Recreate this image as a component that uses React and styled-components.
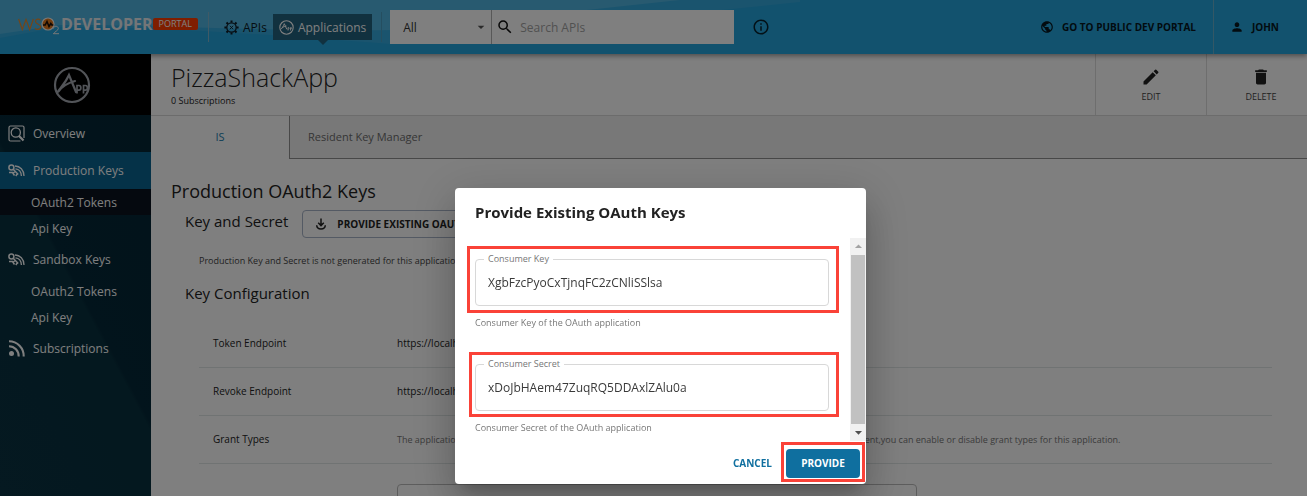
import React from 'react';
import styled, { createGlobalStyle, css } from 'styled-components';
import {
  MdPublic, MdPerson, MdEdit, MdDelete, MdSearch, MdOutlineInfo, MdArrowDropDown, MdArrowDropUp,
} from 'react-icons/md';

const GlobalStyle = createGlobalStyle`
  *, *::before, *::after { box-sizing: border-box; }
  html, body { margin: 0; padding: 0; }
  body { font-family: "Open Sans", "Noto Sans", sans-serif; font-size: 12px; color: #222; background: #fff; }
  button, input, select { font-family: inherit; }
  h1, h2, h3, p { margin: 0; font-weight: 400; }
  a { color: inherit; text-decoration: none; }
  svg { display: block; flex: none; }
`;

const Page = styled.div`
  height: 100vh;
  overflow: hidden;
  display: flex;
  flex-direction: column;
`;

/* ---------- top bar ---------- */
const TopBar = styled.header`
  flex: none;
  height: 54px;
  display: flex;
  align-items: center;
  position: relative;
  z-index: 1;
  background: #24a4dc;
  box-shadow: 0 2px 5px rgba(0, 0, 0, 0.4);
`;
const Wave = styled.svg`
  position: absolute;
  inset: 0;
  width: 100%;
  height: 100%;
  z-index: -1;
`;
const Logo = styled.a`
  display: flex;
  align-items: center;
  width: 209px;
  height: 30px;
  padding: 0 0 7px 18px;
  border-right: 1px solid #7fb4cc;
`;
const LogoName = styled.span`
  color: #e8edf0;
  font-size: 16px;
  line-height: 20px;
  font-weight: 700;
`;
const LogoTag = styled.span`
  background: #ff3c00;
  color: #fff;
  font-size: 9px;
  line-height: 12px;
  padding: 0 6px;
  border-radius: 2px;
`;
const MainNav = styled.nav`
  display: flex;
  align-items: center;
  height: 30px;
  padding: 0 9px;
  border-right: 1px solid #4a9cc0;
`;
const NavLink = styled.a`
  display: flex;
  align-items: center;
  gap: 4px;
  height: 26px;
  padding: 0 6px;
  font-size: 12px;
  position: relative;
  color: ${(p) => (p.$active ? '#fff' : '#0c1a24')};
  ${(p) => p.$active && css`
    background: #22627e;
    &::after {
      content: '';
      position: absolute;
      top: 100%;
      left: 50%;
      margin-left: -5px;
      border: 5px solid transparent;
      border-top-color: #22627e;
      border-bottom: 0;
    }
  `}
`;
const Search = styled.form`
  display: flex;
  margin-left: 8px;
  height: 34px;
  background: #fff;
`;
const SelectWrap = styled.div`
  display: flex;
  align-items: center;
  border-right: 1px solid #b0b0b0;
  width: 102px;
  padding-right: 2px;
  color: #555;
`;
const Select = styled.select`
  appearance: none;
  flex: 1;
  min-width: 0;
  height: 100%;
  padding: 0 0 0 13px;
  border: 0;
  background: transparent;
  font-size: 12px;
  color: #333;
`;
const SearchBox = styled.label`
  display: flex;
  align-items: center;
  gap: 4px;
  width: 242px;
  padding-left: 4px;
  color: #111;
`;
const SearchInput = styled.input`
  flex: 1;
  min-width: 0;
  border: 0;
  padding: 0 2px;
  background: transparent;
  font-size: 12px;
  &::placeholder { color: #a2a2a2; opacity: 1; }
`;
const IconButton = styled.button`
  margin-left: 18px;
  padding: 0;
  border: 0;
  background: none;
  color: #06222e;
`;
const UserNav = styled.nav`
  margin-left: auto;
  display: flex;
  align-self: stretch;
`;
const UserLink = styled.a`
  display: flex;
  align-items: center;
  gap: 8px;
  padding: ${(p) => (p.$user ? '0 28px 0 16px' : '0 17px')};
  border-left: ${(p) => (p.$user ? '1px solid #66b0cc' : '0')};
  font-size: 10px;
  font-weight: 700;
  color: #06161e;
`;

/* ---------- side bar ---------- */
const Body = styled.div`
  flex: 1;
  display: flex;
  min-height: 0;
`;
const SideBar = styled.aside`
  flex: none;
  width: 151px;
  background: linear-gradient(62deg, #0a3242 0%, #08303e 48%, #052838 49%, #042634 100%);
`;
const AppBadge = styled.div`
  height: 61px;
  display: flex;
  align-items: center;
  justify-content: center;
  padding-right: 8px;
  background: #000;
`;
const SideLink = styled.a`
  display: flex;
  align-items: center;
  gap: 8px;
  height: 37px;
  padding-left: 8px;
  font-size: 12px;
  color: #fff;
  background: ${(p) => (p.$active ? '#0a6490' : 'transparent')};
`;
const SubLink = styled.a`
  display: flex;
  align-items: center;
  height: 26px;
  padding-left: 31px;
  font-size: 12px;
  color: #fff;
  background: ${(p) => (p.$active ? '#0a131e' : 'transparent')};
`;

/* ---------- content ---------- */
const Main = styled.main`
  flex: 1;
  min-width: 0;
  background: #fff;
`;
const AppHeader = styled.div`
  display: flex;
  height: 62px;
  border-bottom: 1px solid #d8d8d8;
`;
const AppTitle = styled.div`
  flex: 1;
  padding: 7px 0 0 20px;
  h1 { font-size: 25px; line-height: 32px; font-weight: 300; }
  p { font-size: 9px; line-height: 16px; }
`;
const Action = styled.button`
  width: ${(p) => (p.$last ? '101px' : '111px')};
  display: flex;
  flex-direction: column;
  align-items: center;
  justify-content: center;
  gap: 4px;
  padding: ${(p) => (p.$last ? '0 0 0 8px' : '0')};
  border: 0;
  border-left: 1px solid #dcdcdc;
  background: none;
  font-size: 9px;
  line-height: 12px;
  color: #444;
  svg { color: #222; }
`;
const Tabs = styled.div`
  display: flex;
  height: 43px;
`;
const Tab = styled.button`
  width: 138px;
  padding: 0 0 2px;
  border: 0;
  background: none;
  color: #1a7cae;
  font-size: 11px;
`;
const IdleTab = styled(Tab)`
  flex: 1;
  padding-left: 18px;
  text-align: left;
  color: #6c6c6c;
  background: #f0f0f0;
  border-left: 1px solid #909090;
  border-bottom: 1px solid #909090;
`;
const Content = styled.section`
  padding: 19px 35px 0 20px;
  h2 { font-size: 18px; line-height: 26px; }
`;
const Group = styled.div`
  padding-left: 14px;
  h3 { font-size: 15px; line-height: 22px; }
`;
const GroupHead = styled.div`
  display: flex;
  align-items: flex-start;
  gap: 14px;
  height: 45px;
  padding-top: 6px;
`;
const OutlineButton = styled.button`
  display: flex;
  align-items: center;
  gap: 10px;
  height: 28px;
  padding: 0 12px;
  border: 1px solid #a8b4c8;
  border-radius: 4px;
  background: none;
  font-size: 10px;
  font-weight: 700;
  color: #222;
`;
const Note = styled.p`
  padding: 5px 14px 14px;
  font-size: 9px;
  line-height: 14px;
  color: #444;
`;
const ConfigTable = styled.table`
  width: calc(100% - 14px);
  margin: 15px 0 0 14px;
  border-collapse: collapse;
  table-layout: fixed;
  th, td { height: 48px; padding: 0; text-align: left; font-weight: 400; font-size: 10px; }
  th { width: 198px; padding-left: 14px; }
  tr { border-bottom: 1px solid #e0e6e6; }
  tr:last-child { border-bottom: 0; }
`;
const Hint = styled.span`
  font-size: 9px;
  color: #777;
`;
const ConfigInput = styled.input`
  display: block;
  width: 100%;
  max-width: 520px;
  height: 46px;
  margin-top: 20px;
  border: 1px solid #bbb;
  border-radius: 4px;
  background: none;
`;

/* ---------- dialog ---------- */
const Backdrop = styled.div`
  position: fixed;
  inset: 0;
  z-index: 10;
  display: flex;
  justify-content: center;
  align-items: flex-start;
  padding: 188px 0 0 14px;
  background: rgba(0, 0, 0, 0.5);
`;
const Dialog = styled.div`
  width: 411px;
  border-radius: 4px;
  background: #fff;
  box-shadow: 0 11px 15px -7px rgba(0, 0, 0, 0.2), 0 24px 38px 3px rgba(0, 0, 0, 0.14), 0 9px 46px 8px rgba(0, 0, 0, 0.12);
  h2 { padding: 14px 20px 15px; font-size: 15px; line-height: 21px; font-weight: 700; }
`;
const DialogBody = styled.div`
  display: flex;
  height: 203px;
`;
const Fields = styled.div`
  flex: 1;
  padding: 21px 21px 0 20px;
`;
const FieldGroup = styled.div`
  height: 105px;
`;
const mark = css`
  &::after {
    content: '';
    position: absolute;
    inset: ${(p) => p.$mark};
    border: 3px solid #fa4238;
    pointer-events: none;
  }
`;
const Field = styled.div`
  position: relative;
  ${mark}
  label {
    position: absolute;
    top: -7px;
    left: 9px;
    padding: 0 4px;
    background: #fff;
    font-size: 9px;
    line-height: 14px;
    color: #777;
  }
  input {
    display: block;
    width: 100%;
    height: 47px;
    padding: 0 12px;
    border: 1px solid #d8d8d8;
    border-radius: 4px;
    background: #fff;
    font-size: 12px;
    color: #3a3a3a;
  }
`;
const FieldHint = styled.p`
  padding-top: 10px;
  font-size: 9px;
  line-height: 14px;
  color: #777;
`;
const ScrollTrack = styled.div`
  width: 16px;
  display: flex;
  flex-direction: column;
  align-items: center;
  background: #f1f1f1;
`;
const ScrollThumb = styled.div`
  flex: 1;
  width: 14px;
  background: #c1c1c1;
`;
const DialogActions = styled.div`
  display: flex;
  justify-content: flex-end;
  align-items: center;
  gap: 2px;
  height: 43px;
  padding: 1px 6px 0 0;
`;
const TextButton = styled.button`
  height: 29px;
  padding: 0 12px;
  border: 0;
  border-radius: 4px;
  background: none;
  font-size: 10px;
  font-weight: 700;
  color: #0f6f9f;
`;
const MarkedAction = styled.div`
  position: relative;
  ${mark}
`;
const PrimaryButton = styled(TextButton)`
  display: block;
  width: 74px;
  background: #0f6f9f;
  color: #fff;
`;

/* ---------- drawings ---------- */
const Wso2Mark = () => (
  <svg width="43" height="26" viewBox="0 0 43 26" fill="none" aria-label="WSO2">
    <path d="M.6 8l3.700 10.500L8 8.500l3.700 10L15.400 8" stroke="#e88b2e" strokeWidth="1.200" />
    <path d="M22.500 9.300c-1.400-1.800-5-1.500-5 1.200 0 3 5.200 2.500 5.200 5.300 0 3-4.200 3.400-5.800 1.300" stroke="#e88b2e" strokeWidth="1.200" />
    <circle cx="30" cy="13" r="6" fill="#e87a1c" stroke="#f4f0ea" strokeWidth="1.200" />
    <path d="M25 14h2.200l1.800-3.500 2 5 1.800-3 1 1.500h1.500" stroke="#1c1008" strokeWidth="1.500" />
    <path d="M35.500 17.500c0-3 4.800-3 4.800 0 0 1.800-3.500 3.300-5 5.200H41" stroke="#f0f0f0" strokeWidth="1" />
  </svg>
);
const GearIcon = () => (
  <svg width="15" height="15" viewBox="0 0 15 15" fill="none" stroke="currentColor">
    <circle cx="7.500" cy="7.500" r="4.700" strokeWidth="1.300" />
    <path d="M7.500 .4v2.200M7.500 12.400v2.200M.4 7.500h2.200M12.400 7.500h2.200M2.500 2.500L4 4M11 11l1.500 1.500M2.500 12.500L4 11M11 4l1.500-1.500" strokeWidth="2" />
    <path d="M5.900 5.800l3.200 3.400M9.100 5.800L5.900 9.200" strokeWidth=".9" />
  </svg>
);
const AppsIcon = () => (
  <svg width="15" height="15" viewBox="0 0 15 15" fill="none" stroke="currentColor">
    <circle cx="7.500" cy="7.500" r="6.700" strokeWidth="1.100" />
    <path d="M1.500 9.500C3 8.500 4.500 6 5.300 3.700l2.500 5.600M2.500 8.500c2-2 3.500-2.300 5-2.500" strokeWidth="1" />
    <path d="M9 10.500V7.600c1.600-.6 1.600 1.600 0 1.500M11.500 10.500V7.600c1.600-.6 1.600 1.600 0 1.500" strokeWidth=".9" />
  </svg>
);
const AppBadgeIcon = () => (
  <svg width="38" height="38" viewBox="0 0 38 38" fill="none" stroke="#a4a8b0">
    <circle cx="19" cy="19" r="17" strokeWidth="2.200" />
    <path d="M4 27c3-5 8-9 12-18l7 17M6 25c4-6 9-8 16-10" strokeWidth="2.200" strokeLinecap="round" />
    <path d="M24 27.500v-8h2c2.500 0 2.500 4.700 0 4.700h-2M30.500 27.500v-8h2c2.500 0 2.500 4.700 0 4.700h-2" strokeWidth="1.700" />
  </svg>
);
const OverviewIcon = () => (
  <svg width="17" height="17" viewBox="0 0 17 17" fill="none" stroke="currentColor">
    <path d="M12.500 16h-10A1.500 1.500 0 011 14.500v-12A1.500 1.500 0 012.500 1h12A1.500 1.500 0 0116 2.500V13" strokeWidth="1.200" />
    <circle cx="7.800" cy="7.500" r="4.600" strokeWidth="1.300" />
    <path d="M10.800 10.800l4.700 4.700" strokeWidth="2.200" />
  </svg>
);
const KeysIcon = () => (
  <svg width="17" height="15" viewBox="0 0 17 15" fill="none" stroke="currentColor">
    <circle cx="3.400" cy="4.500" r="2.500" strokeWidth="1.500" />
    <path d="M5.200 6.300l5 5.200M1 9.500h3.500l2 3M7 8.500L4.800 10.500M9.500 10.500L7.800 13" strokeWidth="1.500" />
    <path d="M7 3c5 0 9 4 9 10M7.500 5.800c3.300.3 5.700 3 5.900 7.200" strokeWidth="1.300" />
  </svg>
);
const FeedIcon = () => (
  <svg width="17" height="17" viewBox="0 0 17 17" fill="none" stroke="currentColor">
    <circle cx="3.500" cy="13.500" r="2.500" fill="currentColor" stroke="none" />
    <path d="M1 1.300A14.700 14.700 0 0115.700 16.500M1 6.300a9.800 9.800 0 019.700 10.200" strokeWidth="2.100" />
  </svg>
);
const DownloadIcon = () => (
  <svg width="12" height="12" viewBox="0 0 12 12" fill="none" stroke="currentColor" strokeWidth="1.500">
    <path d="M6 .5v6.800M3.200 4.800L6 7.600l2.800-2.800M1.700 7.300c.2 5 8.400 5 8.600 0" />
  </svg>
);

const fields = [
  { id: 'consumer-key', label: 'Consumer Key', value: 'XgbFzcPyoCxTjnqFC2zCNliSSlsa', hint: 'Consumer Key of the OAuth application', mark: '-13px -10px -7px -8px' },
  { id: 'consumer-secret', label: 'Consumer Secret', value: 'xDoJbHAem47ZuqRQ5DDAxlZAlu0a', hint: 'Consumer Secret of the OAuth application', mark: '-12px -10px -6px -6px' },
];

export default function App() {
  return (
    <>
      <GlobalStyle />
      <Page>
        <TopBar>
          <Wave viewBox="0 0 1307 54" preserveAspectRatio="none">
            <path d="M0 38L60 27C150 26 260 34 390 44L800 2V0H0Z" fill="#34a8dc" />
            <path d="M0 34L60 25C150 24 260 32 400 30L680 0H0Z" fill="#50b4e0" />
          </Wave>
          <Logo href="#home">
            <Wso2Mark />
            <LogoName>DEVELOPER</LogoName>
            <LogoTag>PORTAL</LogoTag>
          </Logo>
          <MainNav>
            <NavLink href="#apis"><GearIcon />APIs</NavLink>
            <NavLink href="#applications" $active><AppsIcon />Applications</NavLink>
          </MainNav>
          <Search>
            <SelectWrap>
              <Select aria-label="Search scope" defaultValue="All"><option>All</option></Select>
              <MdArrowDropDown size={16} />
            </SelectWrap>
            <SearchBox>
              <MdSearch size={18} />
              <SearchInput aria-label="Search APIs" placeholder="Search APIs" />
            </SearchBox>
          </Search>
          <IconButton type="button" aria-label="Search help"><MdOutlineInfo size={18} /></IconButton>
          <UserNav>
            <UserLink href="#public"><MdPublic size={14} />GO TO PUBLIC DEV PORTAL</UserLink>
            <UserLink href="#user" $user><MdPerson size={14} />JOHN</UserLink>
          </UserNav>
        </TopBar>

        <Body>
          <SideBar>
            <AppBadge><AppBadgeIcon /></AppBadge>
            <SideLink href="#overview"><OverviewIcon />Overview</SideLink>
            <SideLink href="#production" $active><KeysIcon />Production Keys</SideLink>
            <SubLink href="#production-oauth" $active>OAuth2 Tokens</SubLink>
            <SubLink href="#production-api">Api Key</SubLink>
            <SideLink href="#sandbox"><KeysIcon />Sandbox Keys</SideLink>
            <SubLink href="#sandbox-oauth">OAuth2 Tokens</SubLink>
            <SubLink href="#sandbox-api">Api Key</SubLink>
            <SideLink href="#subscriptions"><FeedIcon />Subscriptions</SideLink>
          </SideBar>

          <Main>
            <AppHeader>
              <AppTitle>
                <h1>PizzaShackApp</h1>
                <p>0 Subscriptions</p>
              </AppTitle>
              <Action type="button"><MdEdit size={20} />EDIT</Action>
              <Action type="button" $last><MdDelete size={20} />DELETE</Action>
            </AppHeader>
            <Tabs>
              <Tab type="button">IS</Tab>
              <IdleTab type="button">Resident Key Manager</IdleTab>
            </Tabs>
            <Content>
              <h2>Production OAuth2 Keys</h2>
              <Group>
                <GroupHead>
                  <h3>Key and Secret</h3>
                  <OutlineButton type="button"><DownloadIcon />PROVIDE EXISTING OAUTH KEYS</OutlineButton>
                </GroupHead>
                <Note>Production Key and Secret is not generated for this application</Note>
                <h3>Key Configuration</h3>
                <ConfigTable>
                  <tbody>
                    <tr><th scope="row">Token Endpoint</th><td>https://localhost:9443/oauth2/token</td></tr>
                    <tr><th scope="row">Revoke Endpoint</th><td>https://localhost:9443/oauth2/revoke</td></tr>
                    <tr>
                      <th scope="row">Grant Types</th>
                      <td><Hint>The application can use the following grant types to generate Access Tokens. Based on the application requirement,you can enable or disable grant types for this application.</Hint></td>
                    </tr>
                    <tr><th /><td><ConfigInput aria-label="Callback URL" /></td></tr>
                  </tbody>
                </ConfigTable>
              </Group>
            </Content>
          </Main>
        </Body>
      </Page>

      <Backdrop>
        <Dialog role="dialog" aria-modal="true" aria-labelledby="dialog-title">
          <h2 id="dialog-title">Provide Existing OAuth Keys</h2>
          <DialogBody>
            <Fields>
              {fields.map((f) => (
                <FieldGroup key={f.id}>
                  <Field $mark={f.mark}>
                    <label htmlFor={f.id}>{f.label}</label>
                    <input id={f.id} defaultValue={f.value} />
                  </Field>
                  <FieldHint>{f.hint}</FieldHint>
                </FieldGroup>
              ))}
            </Fields>
            <ScrollTrack>
              <MdArrowDropUp size={17} color="#a3a3a3" />
              <ScrollThumb />
              <MdArrowDropDown size={17} color="#505050" />
            </ScrollTrack>
          </DialogBody>
          <DialogActions>
            <TextButton type="button">CANCEL</TextButton>
            <MarkedAction $mark="-7px -5px -4px -5px">
              <PrimaryButton type="button">PROVIDE</PrimaryButton>
            </MarkedAction>
          </DialogActions>
        </Dialog>
      </Backdrop>
    </>
  );
}
